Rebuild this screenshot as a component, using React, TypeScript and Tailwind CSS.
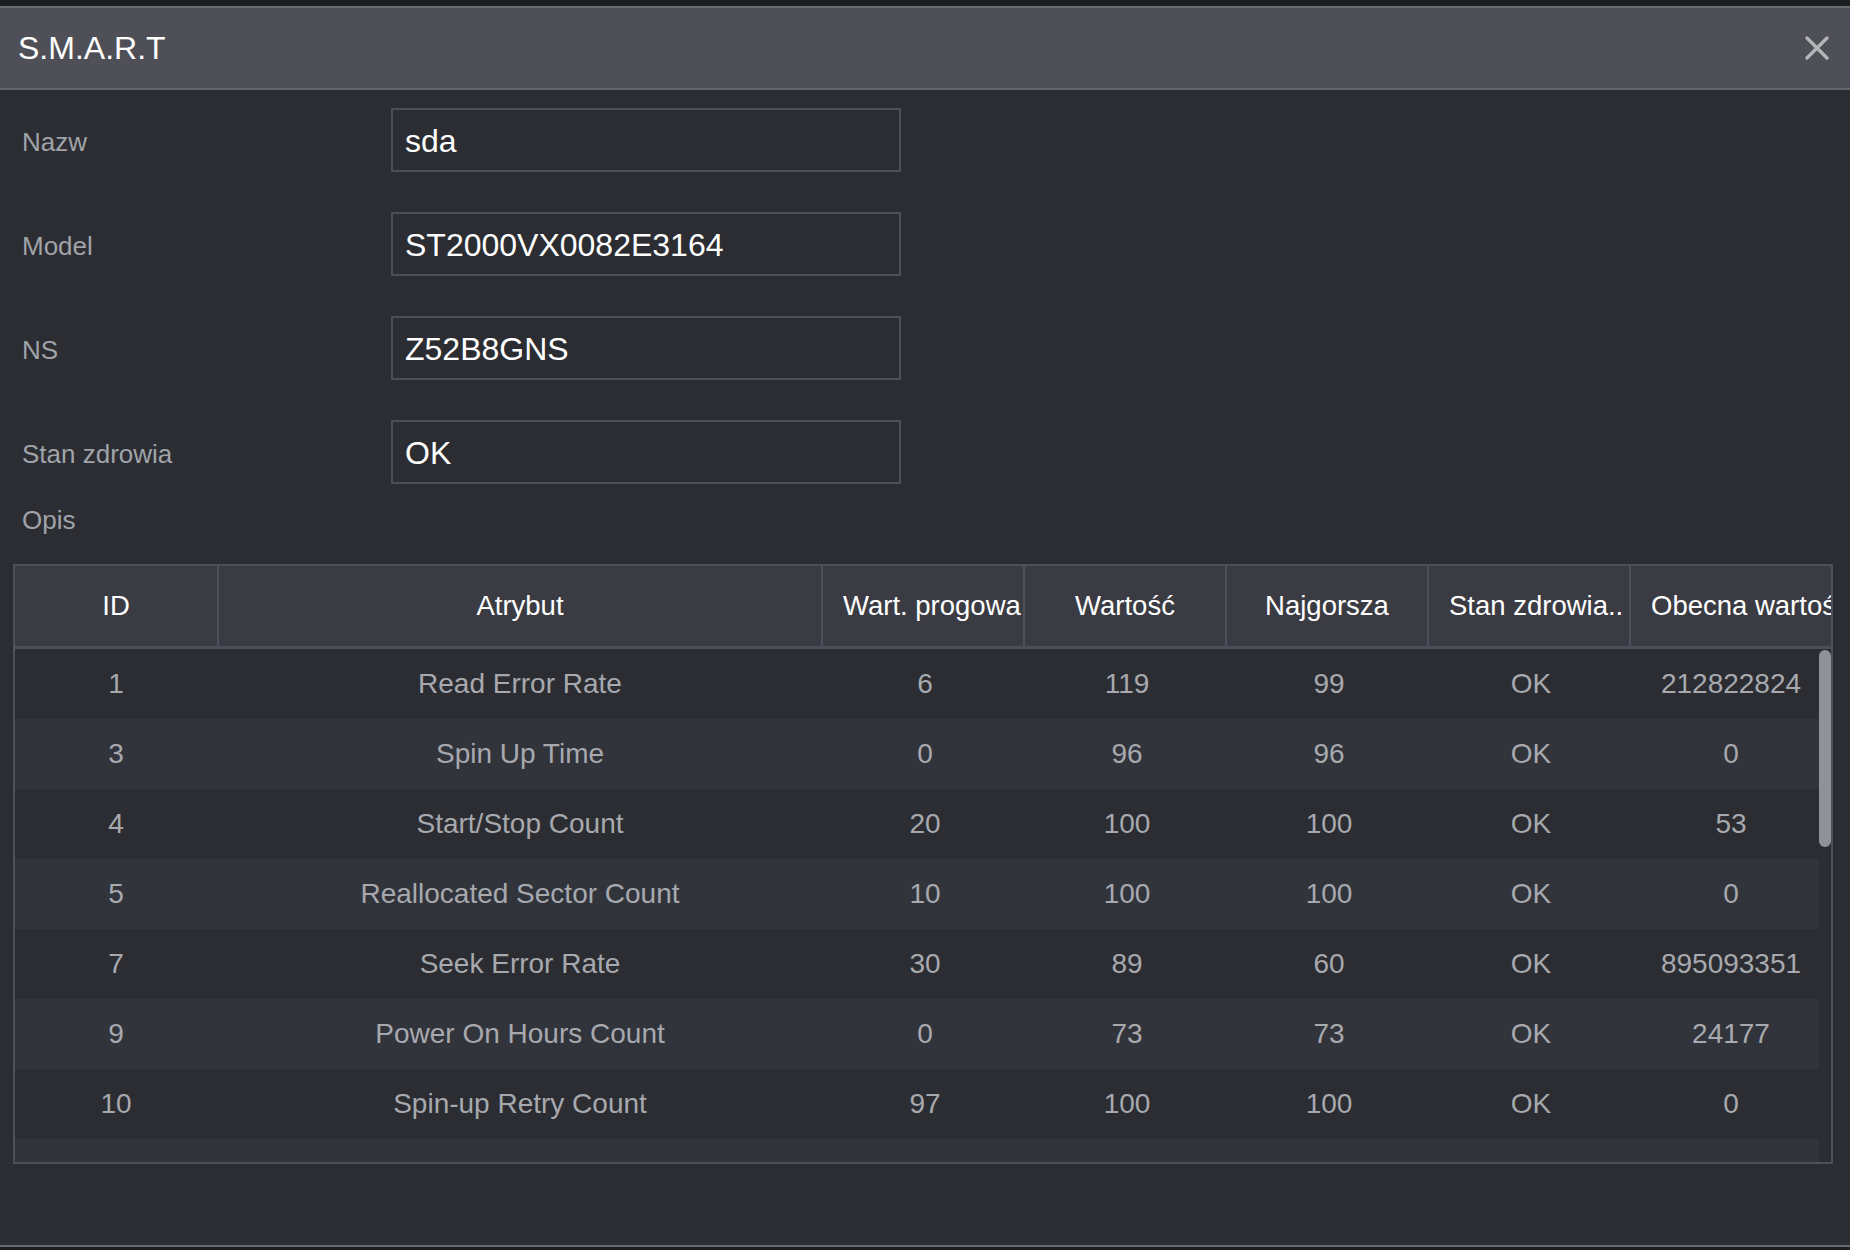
const fields = [
  { label: "Nazw", value: "sda" },
  { label: "Model", value: "ST2000VX0082E3164" },
  { label: "NS", value: "Z52B8GNS" },
  { label: "Stan zdrowia", value: "OK" },
];

const columns = ["ID", "Atrybut", "Wart. progowa", "Wartość", "Najgorsza", "Stan zdrowia..", "Obecna wartość"];

const rows = [
  ["1", "Read Error Rate", "6", "119", "99", "OK", "212822824"],
  ["3", "Spin Up Time", "0", "96", "96", "OK", "0"],
  ["4", "Start/Stop Count", "20", "100", "100", "OK", "53"],
  ["5", "Reallocated Sector Count", "10", "100", "100", "OK", "0"],
  ["7", "Seek Error Rate", "30", "89", "60", "OK", "895093351"],
  ["9", "Power On Hours Count", "0", "73", "73", "OK", "24177"],
  ["10", "Spin-up Retry Count", "97", "100", "100", "OK", "0"],
  ["12", "Power Cycle Count", "20", "100", "100", "OK", "53"],
];

const grid = "grid grid-cols-[202px_604px_202px_202px_202px_202px_202px]";

// body cells sit a little right of the header centres in the original
const cellPad = ["", "pl-[2px]", "pl-[6px]", "pl-[6px]", "pl-[6px]", "pl-[6px]", "pl-[2px]"];

export default function App() {
  return (
    <div className="h-[1250px] bg-[#1c1d21] pt-[6px] font-['Liberation_Sans',Arial,sans-serif]">
      <div className="flex h-[1241px] flex-col border-y-2 border-[#676b72] bg-[#2b2d32]">
        <div className="flex h-[82px] shrink-0 items-center justify-between border-b-2 border-[#62666d] bg-[#4f5057] pl-[18px] pr-[20px]">
          <h1 className="text-[32px] leading-none text-white">S.M.A.R.T</h1>
          <button className="flex h-[27px] w-[27px] items-center justify-center text-[#b4b5b9]" aria-label="Zamknij">
            <svg width="26" height="26" viewBox="0 0 26 26" fill="none" stroke="currentColor" strokeWidth="3.4" strokeLinecap="round">
              <path d="M3 3L23 23M23 3L3 23" />
            </svg>
          </button>
        </div>

        <div className="flex flex-1 flex-col pt-[18px]">
          <div className="flex flex-col gap-[40px] pl-[22px]">
            {fields.map((f) => (
              <div key={f.label} className="flex h-[64px] items-center">
                <span className="w-[369px] pt-[4px] text-[26px] text-[#a0a3a9]">{f.label}</span>
                <div className="flex h-[64px] w-[510px] items-center border-2 border-[#4b4e57] pl-[12px] pt-[2px] text-[32px] text-white">
                  {f.value}
                </div>
              </div>
            ))}
            <div className="-mt-[38px] flex h-[64px] items-center pt-[5px]">
              <span className="text-[26px] text-[#a0a3a9]">Opis</span>
            </div>
          </div>

          <div className="mx-[13px] mt-[14px] w-[1820px] border-2 border-[#4c505a]">
            <div className={`${grid} h-[83px] border-b-[3px] border-[#4c505c] bg-[#3b3c43]`}>
              {columns.map((c, i) => (
                <div
                  key={c}
                  className={`flex items-center justify-center overflow-hidden whitespace-nowrap px-[20px] text-center text-[27.5px] text-white ${
                    i > 0 ? "border-l-2 border-[#4c505a]" : ""
                  }`}
                >
                  <span className="block w-full text-center">{c}</span>
                </div>
              ))}
            </div>
            <div className="relative h-[513px] overflow-hidden">
              {rows.map((r, idx) => (
                <div key={r[0]} className={`${grid} h-[70px] ${idx % 2 === 1 ? "bg-[#32343c]" : "bg-[#2b2d32]"}`}>
                  {r.map((v, i) => (
                    <div key={i} className={`flex items-center justify-center whitespace-nowrap text-[28px] text-[#a7a9ae] ${cellPad[i]}`}>
                      {v}
                    </div>
                  ))}
                </div>
              ))}
              <div className="absolute right-0 top-0 h-full w-[12px] bg-[#2b2d32]">
                <div className="mt-[1px] h-[197px] w-[12px] rounded-full bg-[#8f9398]" />
              </div>
            </div>
          </div>
        </div>
      </div>
    </div>
  );
}
